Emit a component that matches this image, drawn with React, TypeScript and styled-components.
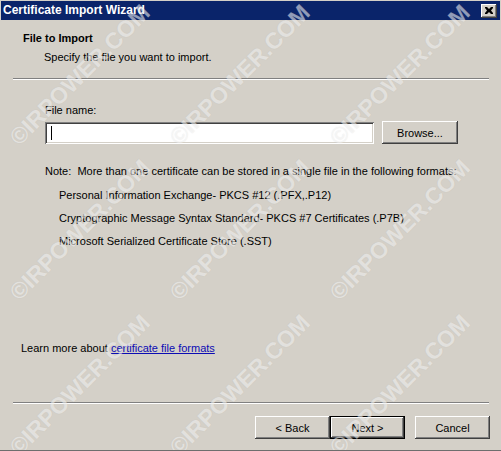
import styled, { createGlobalStyle } from 'styled-components'

const GlobalStyle = createGlobalStyle`
    html, body {
        margin: 0;
        padding: 0;
        background: #d4d0c8;
    }
    body {
        font-family: Tahoma, "Liberation Sans", Arial, sans-serif;
        font-size: 11px;
        color: #000;
    }
`

const Window = styled.div`
    position: relative;
    width: 501px;
    height: 451px;
    box-sizing: border-box;
    background: #d4d0c8;
    border-bottom: 1px solid #6e6e6e;
    padding-top: 1px;
    display: flex;
    flex-direction: column;
    overflow: hidden;
`

const TitleBar = styled.div`
    height: 19px;
    margin: 0 1px;
    background: #0a246a;
    display: flex;
    align-items: center;
    justify-content: space-between;
    padding: 0 3px 0 2px;
`

const TitleText = styled.span`
    color: #fff;
    font-weight: bold;
    font-size: 12px;
    line-height: 19px;
`

const CloseButton = styled.div`
    width: 16px;
    height: 14px;
    box-sizing: border-box;
    background: #d4d0c8;
    box-shadow: inset -1px -1px #404040, inset 1px 1px #fff, inset -2px -2px #808080, inset 2px 2px #d4d0c8;
    display: flex;
    align-items: center;
    justify-content: center;
`

const Header = styled.div`
    padding: 11px 0 14px 23px;
`

const Heading = styled.div`
    font-weight: bold;
    line-height: 14px;
`

const SubHeading = styled.div`
    line-height: 14px;
    margin-top: 5px;
    padding-left: 21px;
`

const Divider = styled.div`
    height: 0;
    margin: 0 12px 0 13px;
    border-top: 1px solid #808080;
    border-bottom: 1px solid #fff;
`

const Body = styled.div`
    flex: 1;
    display: flex;
    flex-direction: column;
    padding: 23px 0 47px 21px;
`

const Section = styled.div`
    padding-left: 24px;
`

const Label = styled.div`
    line-height: 14px;
    margin-bottom: 4px;
`

const FileRow = styled.div`
    display: flex;
    align-items: flex-start;
    gap: 8px;
`

const TextBox = styled.div`
    width: 329px;
    height: 22px;
    margin-top: 1px;
    box-sizing: border-box;
    background: #fff;
    box-shadow: inset 1px 1px #808080, inset -1px -1px #fff, inset 2px 2px #404040, inset -2px -2px #d4d0c8;
    display: flex;
    align-items: center;
    padding-left: 6px;
`

const Caret = styled.span`
    width: 1px;
    height: 14px;
    background: #000;
`

const Button = styled.div<{ $default?: boolean; $width?: number }>`
    width: ${p => p.$width ?? 75}px;
    height: 23px;
    box-sizing: border-box;
    background: #d4d0c8;
    display: flex;
    align-items: center;
    justify-content: center;
    line-height: 14px;
    box-shadow: ${p => p.$default
        ? 'inset 0 0 0 1px #000, inset -2px -2px #404040, inset 2px 2px #fff, inset -3px -3px #808080'
        : 'inset -1px -1px #404040, inset 1px 1px #fff, inset -2px -2px #808080, inset 2px 2px #d4d0c8'};
`

const Note = styled.div`
    line-height: 14px;
    margin-top: 20px;
`

const FormatList = styled.div`
    margin-top: 6px;
    padding-left: 14px;
`

const Format = styled.div`
    line-height: 23px;
`

const LearnMore = styled.div`
    margin-top: auto;
    line-height: 14px;
`

const Link = styled.a`
    color: #0c0cb4;
    text-decoration: underline;
    cursor: pointer;
`

const Footer = styled.div`
    display: flex;
    justify-content: flex-end;
    padding: 12px 11px 11px 0;
`

const CancelWrap = styled.div`
    margin-left: 10px;
`

const Watermark = styled.span`
    position: absolute;
    font-family: "Liberation Sans", Arial, sans-serif;
    font-weight: bold;
    font-size: 23px;
    white-space: nowrap;
    color: rgba(255, 255, 255, 0.5);
    text-shadow: 0 0 1px rgba(140, 140, 140, 0.2);
    transform: translate(-50%, -50%) rotate(-45deg);
    pointer-events: none;
`

const marks: Array<[number, number]> = []
for (let r = 0; r < 3; r++) {
    for (let c = 0; c < 3; c++) {
        marks.push([80 + c * 160, 75 + r * 155])
    }
}

const formats = [
    'Personal Information Exchange- PKCS #12 (.PFX,.P12)',
    'Cryptographic Message Syntax Standard- PKCS #7 Certificates (.P7B)',
    'Microsoft Serialized Certificate Store (.SST)',
]

const App = () => {
    return (
        <Window>
            <GlobalStyle />
            <TitleBar>
                <TitleText>Certificate Import Wizard</TitleText>
                <CloseButton>
                    <svg width="8" height="7" viewBox="0 0 8 7">
                        <path d="M0 0h2l2 2 2-2h2v1L6 3.5 8 6v1H6L4 5 2 7H0V6l2-2.5L0 1z" fill="#000" />
                    </svg>
                </CloseButton>
            </TitleBar>
            <Header>
                <Heading>File to Import</Heading>
                <SubHeading>Specify the file you want to import.</SubHeading>
            </Header>
            <Divider />
            <Body>
                <Section>
                    <Label>File name:</Label>
                    <FileRow>
                        <TextBox><Caret /></TextBox>
                        <Button $width={76}>Browse...</Button>
                    </FileRow>
                    <Note>Note:&nbsp; More than one certificate can be stored in a single file in the following formats:</Note>
                    <FormatList>
                        {formats.map(f => <Format key={f}>{f}</Format>)}
                    </FormatList>
                </Section>
                <LearnMore>Learn more about <Link>certificate file formats</Link></LearnMore>
            </Body>
            <Divider />
            <Footer>
                <Button>&lt; Back</Button>
                <Button $default>Next &gt;</Button>
                <CancelWrap><Button>Cancel</Button></CancelWrap>
            </Footer>
            {marks.map(([x, y]) => (
                <Watermark key={`${x}-${y}`} style={{ left: x, top: y }}>©IRPOWER.COM</Watermark>
            ))}
        </Window>
    )
}

export default App
